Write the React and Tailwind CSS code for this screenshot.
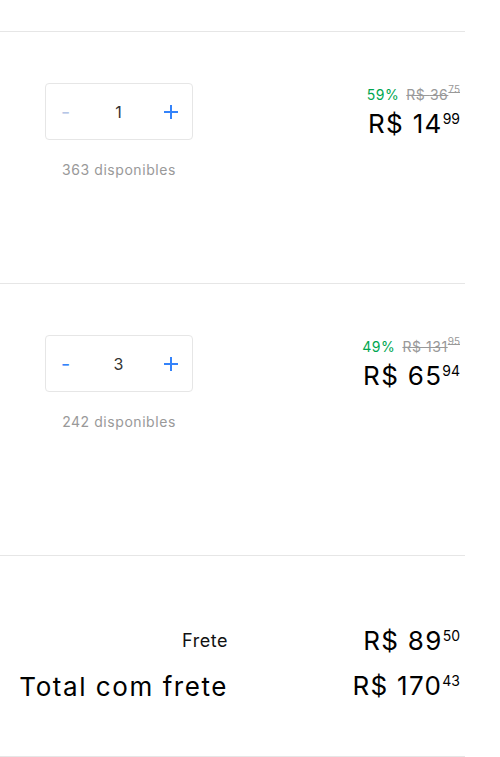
import React from 'react';

const items = [
  { id: 1, qty: 1, stock: 363, discount: '59%', oldInt: '36', oldCents: '75', int: '14', cents: '99', h: 'h-[252px]' },
  { id: 2, qty: 3, stock: 242, discount: '49%', oldInt: '131', oldCents: '95', int: '65', cents: '94', h: 'h-[272px]' },
];

const PlusIcon = () => (
  <svg width="14" height="14" viewBox="0 0 14 14" fill="none" stroke="#3483fa" strokeWidth="2">
    <path d="M7 0v14M0 7h14" />
  </svg>
);

const Stepper = ({ qty }) => (
  <div className="flex h-[57px] w-[148px] items-center rounded-[4px] border border-[#e6e6e6] pl-[15px] pr-[14px] text-[#333]">
    <span className={`w-[12px] text-[20px] leading-none ${qty > 1 ? 'text-[#3483fa]' : 'text-[#b6c6e6]'}`}>-</span>
    <span className="flex-1 text-center text-[16px]">{qty}</span>
    <PlusIcon />
  </div>
);

const Price = ({ int, cents }) => (
  <span className="text-[26px] leading-[32px] tracking-[0.05em] text-black">
    R$ {int}
    <sup className="top-[-9px] text-[14px] tracking-normal">{cents}</sup>
  </span>
);

const CartItem = ({ item }) => (
  <div className={`flex ${item.h} items-start justify-between border-t border-[#e6e6e6] pt-[51px] pr-[5px]`}>
    <div className="flex flex-col items-center pl-[45px]">
      <Stepper qty={item.qty} />
      <p className="mt-[20px] text-[14px] leading-[20px] tracking-[0.04em] text-[#999]">{item.stock} disponibles</p>
    </div>
    <div className="mt-[2px] flex flex-col items-end">
      <div className="flex items-start gap-[7px] text-[14px] leading-[20px] tracking-[0.04em]">
        <span className="text-[#00a650]">{item.discount}</span>
        <span className="text-[#999] line-through">
          R$ {item.oldInt}
          <sup className="top-[-7px] text-[10px] tracking-normal">{item.oldCents}</sup>
        </span>
      </div>
      <div className="mt-[3px]">
        <Price int={item.int} cents={item.cents} />
      </div>
    </div>
  </div>
);

export default function App() {
  return (
    <div className="min-h-screen bg-white font-['Inter','Liberation_Sans',sans-serif]">
      <div className="w-[465px] pt-[31px]">
        {items.map((item) => (
          <CartItem key={item.id} item={item} />
        ))}
        <div className="flex h-[202px] flex-col justify-center gap-[10px] border-y border-[#e6e6e6] pt-[18px] pr-[5px]">
          <div className="flex items-center">
            <span className="w-[228px] text-right text-[18px] tracking-[0.03em] text-[#111]">Frete</span>
            <span className="flex-1 text-right">
              <Price int="89" cents="50" />
            </span>
          </div>
          <div className="flex items-center">
            <span className="w-[228px] text-right text-[26px] tracking-[0.06em] text-black">Total com frete</span>
            <span className="flex-1 text-right">
              <Price int="170" cents="43" />
            </span>
          </div>
        </div>
      </div>
    </div>
  );
}
